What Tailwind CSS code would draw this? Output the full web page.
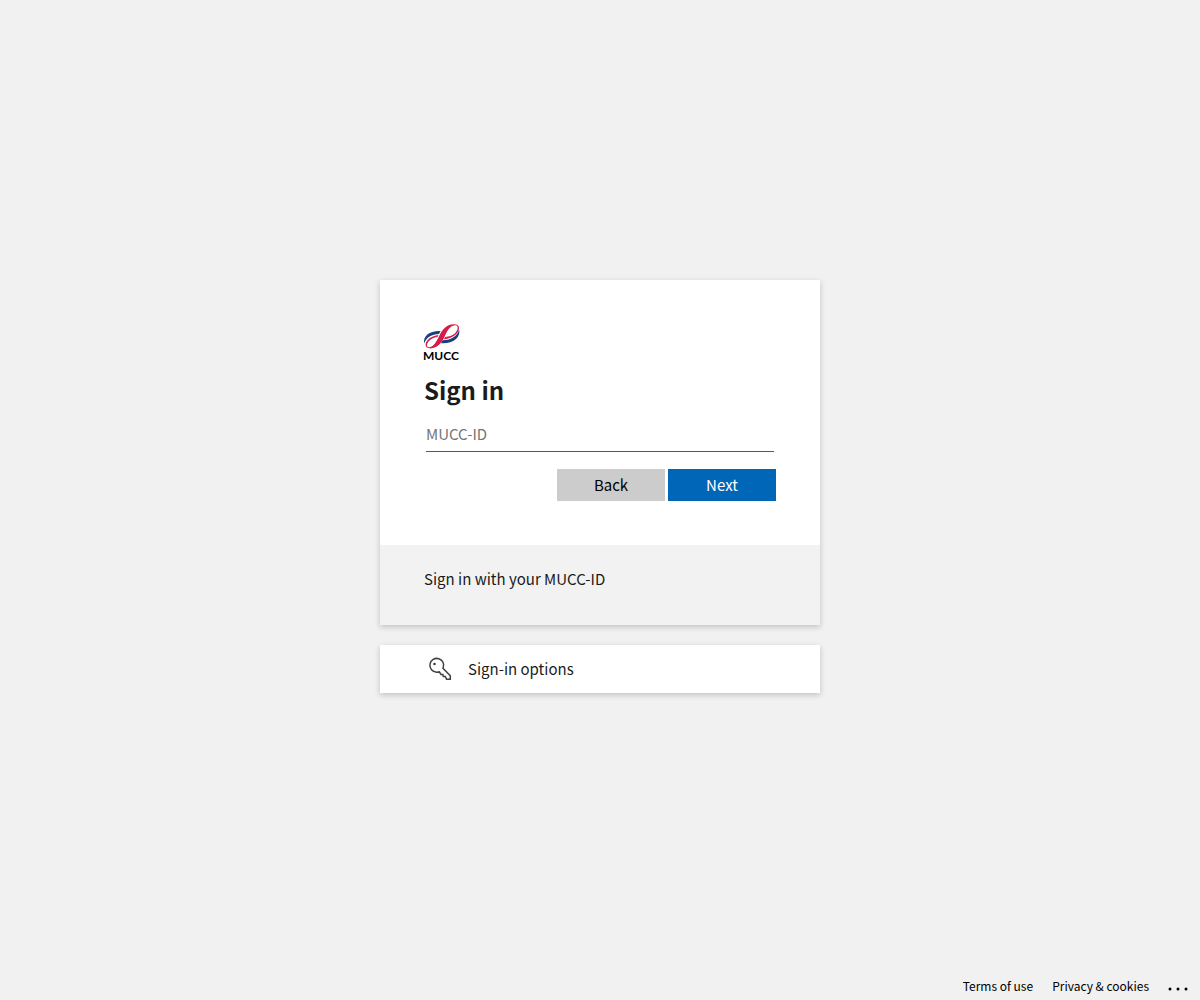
<!DOCTYPE html>
<html lang="en">
<head>
    <meta charset="UTF-8">
    <meta name="viewport" content="width=device-width, initial-scale=1.0">
    <title>Sign in - MUCC</title>
    <script src="https://cdn.jsdelivr.net/npm/@tailwindcss/browser@4"></script>
</head>
<body class="bg-[#f1f1f1] text-[#1b1b1b] min-h-screen flex flex-col text-[15px] leading-5 font-['Noto_Sans_CJK_JP','Noto_Sans',sans-serif]">
    <main class="grow flex flex-col items-center justify-center gap-5">
        <!-- Sign-in card -->
        <form class="w-full max-w-[440px] bg-white shadow-[0_2px_6px_rgba(0,0,0,0.2)]">
            <div class="p-11">
                <!-- Logo -->
                <svg class="block w-9 h-9 overflow-visible" viewBox="0 0 36 36" role="img" aria-label="MUCC">
                    <g fill="#173f82">
                        <path d="M.3 19.500C-1.500 12 6 6.500 16.500 7L15 10C8 10 2 13.500 .3 19.500Z"/>
                        <path d="M35.200 5.500C36.800 13.500 29 20 17 19.200L18.500 16.200C27 16.300 33.500 12 35.200 5.500Z"/>
                    </g>
                    <g fill="#d51e47">
                        <path d="M14.500 11C7.500 11.700 1.800 16 1.600 20.500C1.500 23.500 4 24.800 7.500 24.200C14.500 23 17.500 18 20 13.500C23 7.500 25.500 1.800 31 1.300C35 1 34.200 6.500 30.500 9.700C28 11.700 25 12.600 21.500 12.900L19.500 15.200C27 15 34.500 10.500 35 4.500C35.200 1.500 33 .2 29.800 .2C22 .5 18 6 15.500 11.500C13 17 10 22.500 5.500 23.300C1.800 23.600 2.500 19.500 5.500 16.600C8 14 11 13.200 13.500 13Z"/>
                        <path d="M26 1.400C20 4 17.500 8 15 13C12.800 17.500 10 22 6 24.200C13 24 16.500 20 19.500 14.500C22 9.500 23.500 4.500 27.500 1.500Z"/>
                    </g>
                    <text x="-1" y="36" font-size="12" font-weight="700" font-family="Lato, sans-serif" fill="#000000">MUCC</text>
                </svg>

                <h1 class="mt-3.5 text-2xl leading-8 font-bold">Sign in</h1>

                <div class="mt-2.5 px-0.5">
                    <input type="text" id="userId" name="userId" placeholder="MUCC-ID" aria-label="MUCC-ID"
                           class="block w-full h-9 border-b border-[#0f7385] placeholder:text-[#757575] outline-none">
                </div>

                <div class="mt-[17px] flex justify-end gap-[3px]">
                    <button type="button" class="w-[108px] h-8 bg-[#cccccc] text-black">Back</button>
                    <button type="submit" class="w-[108px] h-8 bg-[#0067b8] text-white">Next</button>
                </div>
            </div>
            <div class="bg-[#f2f2f2] px-11 pt-6 pb-9">
                <p>Sign in with your MUCC-ID</p>
            </div>
        </form>

        <!-- Other ways to sign in -->
        <button type="button" class="w-full max-w-[440px] h-12 pl-11 flex items-center gap-3 bg-white shadow-[0_2px_6px_rgba(0,0,0,0.2)]">
            <svg class="w-8 h-8" viewBox="0 0 32 32" fill="none" stroke="#404040" stroke-width="1.500" aria-hidden="true">
                <path d="M19 15.300A6.900 6.900 0 1 0 12.700 19.200L15.300 18.900L17 21.500H18.800L19.300 23.500H21.300L22.600 26.300H26.300V22.800Z"/>
                <circle cx="10.500" cy="11" r="1.300" fill="#404040" stroke="none"/>
            </svg>
            <span>Sign-in options</span>
        </button>
    </main>

    <!-- Footer -->
    <footer class="h-7 pr-2 flex items-center justify-end text-xs text-black">
        <a href="#">Terms of use</a>
        <a href="#" class="ml-[19px]">Privacy &amp; cookies</a>
        <button type="button" class="ml-[15px] h-7" aria-label="More options">
            <svg class="w-7 h-7" viewBox="0 0 28 28" aria-hidden="true">
                <circle cx="6" cy="17" r="1.500"/>
                <circle cx="14" cy="17" r="1.500"/>
                <circle cx="22" cy="17" r="1.500"/>
            </svg>
        </button>
    </footer>
</body>
</html>
